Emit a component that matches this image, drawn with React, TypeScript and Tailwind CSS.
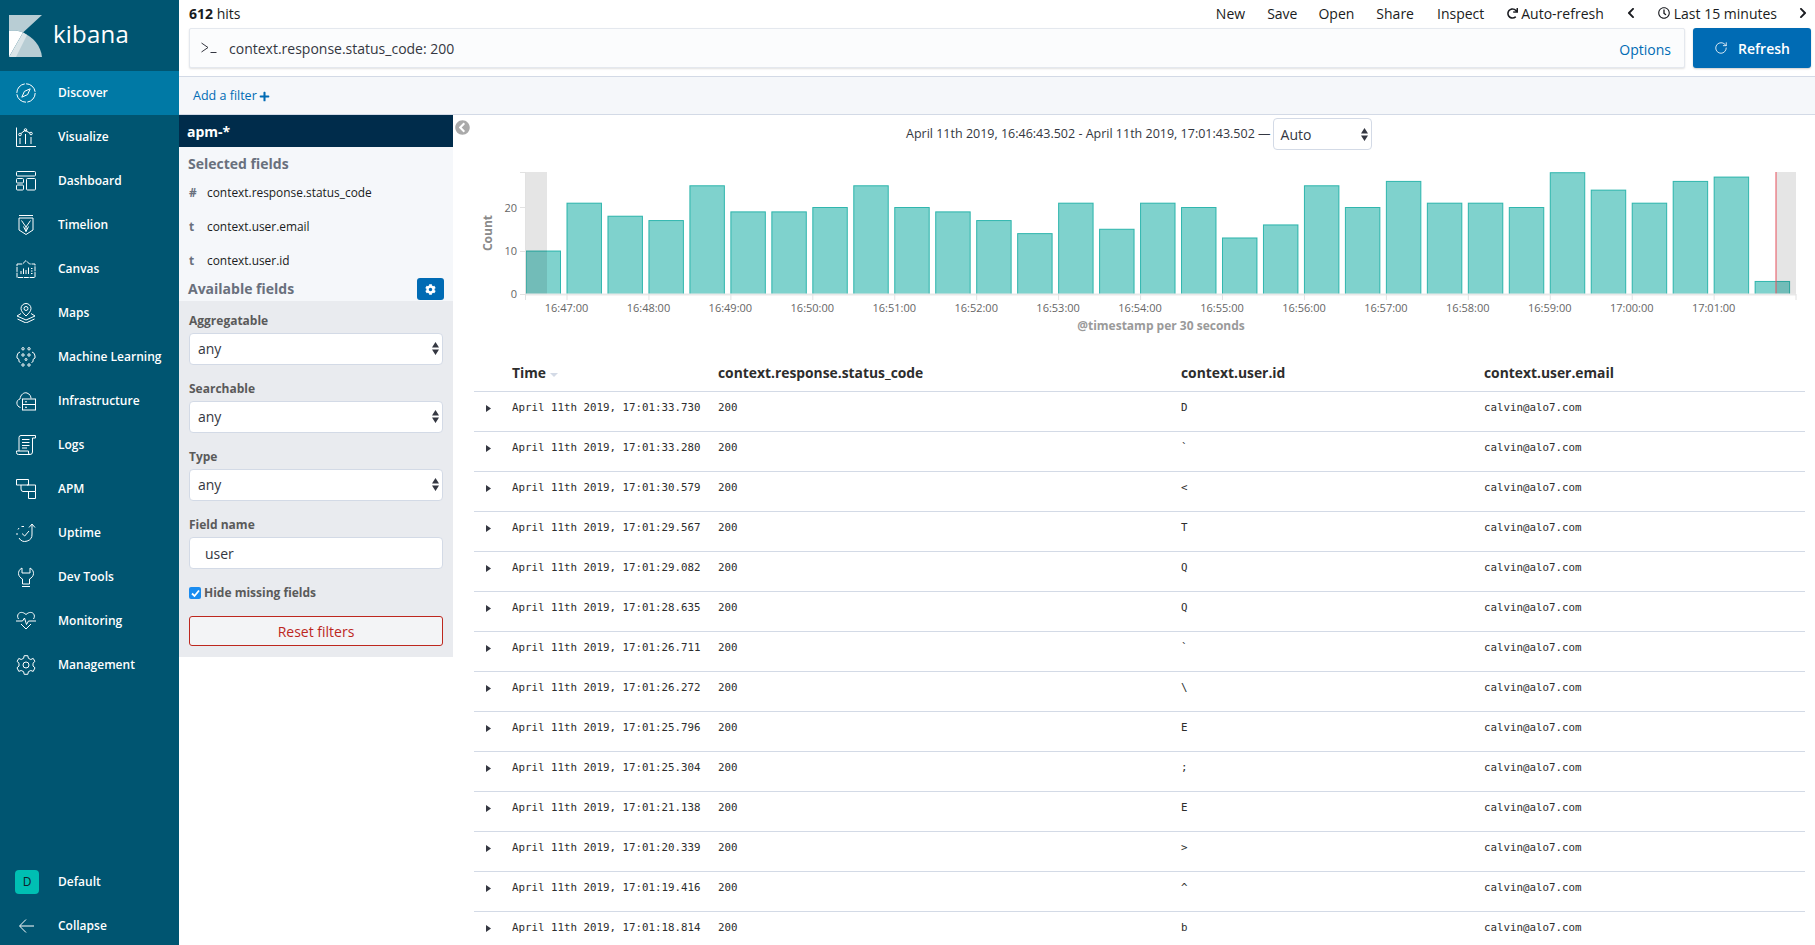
import React from "react";
import { RotateCw } from "lucide-react";
import { FaChevronCircleLeft, FaChevronLeft, FaChevronRight, FaCog, FaPlus, FaRedo, FaRegClock } from "react-icons/fa";

const counts = [10, 21, 18, 17, 25, 19, 19, 20, 25, 20, 19, 17, 14, 21, 15, 21, 20, 13, 16, 25, 20, 26, 21, 21, 20, 28, 24, 21, 26, 27, 3];
const ticks = ["16:47:00", "16:48:00", "16:49:00", "16:50:00", "16:51:00", "16:52:00", "16:53:00", "16:54:00", "16:55:00", "16:56:00", "16:57:00", "16:58:00", "16:59:00", "17:00:00", "17:01:00"];

const rows = [
  ["33.730", "D"],
  ["33.280", "`"],
  ["30.579", "<"],
  ["29.567", "T"],
  ["29.082", "Q"],
  ["28.635", "Q"],
  ["26.711", "`"],
  ["26.272", "\\"],
  ["25.796", "E"],
  ["25.304", ";"],
  ["21.138", "E"],
  ["20.339", ">"],
  ["19.416", "^"],
  ["18.814", "b"],
];

function NavIcon({ children }: { children: React.ReactNode }) {
  return (
    <svg width="20" height="20" viewBox="0 0 20 20" fill="none" stroke="white" strokeWidth="1" className="shrink-0">
      {children}
    </svg>
  );
}

const navItems: { label: string; icon: React.ReactNode }[] = [
  {
    label: "Discover",
    icon: (
      <>
        <circle cx="10" cy="10" r="9.2" strokeDasharray="13 1.4" />
        <path d="M14.2 5.8 L11.6 11.6 L5.8 14.2 L8.4 8.4 Z" />
      </>
    ),
  },
  {
    label: "Visualize",
    icon: (
      <>
        <path d="M.5 .5 V19.5 H20" />
        <path d="M4.6 6.8 L9 3.3 L14.2 6.2" />
        <circle cx="4" cy="7.5" r="1.3" />
        <circle cx="9.5" cy="3" r="1.3" />
        <circle cx="15" cy="6.5" r="1.3" />
        <path d="M4 11 V17 M9.5 7 V17 M15 10 V17" />
      </>
    ),
  },
  {
    label: "Dashboard",
    icon: (
      <>
        <rect x=".5" y=".5" width="19" height="4.5" rx="1" />
        <rect x=".5" y="7.5" width="7" height="4.5" rx="1" />
        <rect x=".5" y="14" width="7" height="5" rx="1" />
        <rect x="10.5" y="7.5" width="9" height="11.5" rx="1" />
      </>
    ),
  },
  {
    label: "Timelion",
    icon: (
      <>
        <path d="M3 .5 H17 M3 3 H17 V15 L10 19.5 L3 15 Z" />
        <path d="M5.5 5.5 L10 12 L14.5 5.5 M10 12 V16.5 M7.5 11.5 L10 16.5 L12.5 11.5" />
      </>
    ),
  },
  {
    label: "Canvas",
    icon: (
      <>
        <path d="M1 5 H6.5 L10 1.5 L13.5 5 H19 V18.5 H1 Z" strokeDasharray="5 .8" />
        <path d="M5 15 V12 M7.5 15 V9.5 M10 15 V11 M12.5 15 V8.5 M15 9.5 H16.5 M15 12 H16.5 M15 14.5 H16.5" />
      </>
    ),
  },
  {
    label: "Maps",
    icon: (
      <>
        <path d="M10 13 C7 10 5 8 5 5.5 A5 5 0 0 1 15 5.5 C15 8 13 10 10 13 Z" />
        <circle cx="10" cy="5.5" r="2" />
        <path d="M5 10.5 L1 13 L10 17 L19 13 L15 10.5 M1.5 16 L10 20 L18.5 16" />
      </>
    ),
  },
  {
    label: "Machine Learning",
    icon: (
      <>
        <circle cx="7" cy="1.8" r="1.2" />
        <circle cx="13" cy="1.8" r="1.2" />
        <circle cx="7" cy="8" r="1.2" />
        <circle cx="13" cy="8" r="1.2" />
        <circle cx="7" cy="18" r="1.2" />
        <circle cx="13" cy="18" r="1.2" />
        <circle cx="10" cy="12.5" r="1" />
        <path d="M4 5 Q1 6 1 9 V11 L3 12.5 Q2 15 4.5 15.5 M16 5 Q19 6 19 9 V11 L17 12.5 Q18 15 15.5 15.5" />
      </>
    ),
  },
  {
    label: "Infrastructure",
    icon: (
      <>
        <path d="M4.5 16.5 C0 15.5 -.5 9 4 8 C4.5 3.5 8 1 11 2 C14 3 15 5.5 15 7.5" />
        <rect x="6.5" y="8" width="13" height="11" />
        <path d="M6.5 13.5 H19.5 M9 10.8 H11 M9 16.3 H11" />
      </>
    ),
  },
  {
    label: "Logs",
    icon: (
      <>
        <path d="M3 16 V2.5 A2 2 0 0 1 5 .5 H19.5 V3 H16.5 V17 Q16.5 19.5 14 19.5 H2.5 Q.5 19.5 .5 17.5 V16 H12.5 V18 Q12.5 19.5 14 19.5" />
        <path d="M6 4.5 H13.5 M6 7.5 H13.5 M6 10.5 H13.5 M6 13 H11" />
      </>
    ),
  },
  {
    label: "APM",
    icon: (
      <>
        <path d="M.5 .5 H12.5 V6 H.5 Z" strokeDasharray="19 7.5 50" />
        <path d="M3.5 6 H19.5 V12.5 H7 Q5 12.5 5 10 V6" />
        <path d="M12.5 12.5 V19.5 H19.5 V12.5" />
      </>
    ),
  },
  {
    label: "Uptime",
    icon: (
      <>
        <path d="M16 1 L13 4.5 M16 1 L19 4.5 M16 1 V11 A7 7 0 0 1 3 15 M1 12 V10 M2 6.5 L3 5 M5.5 3.5 H8" />
        <path d="M6 10.5 L8.7 13 L13 8" />
      </>
    ),
  },
  {
    label: "Dev Tools",
    icon: (
      <>
        <path d="M6 1 C3 2.5 2.5 5 2.5 6.5 C2.5 9 4.5 11 6.5 12 V17 H13.5 V12 C15.5 11 17.5 9 17.5 6.5 C17.5 5 17 2.5 14 1 V6 H6 Z" />
        <path d="M6 19.5 H14" />
      </>
    ),
  },
  {
    label: "Monitoring",
    icon: (
      <>
        <path d="M2.5 8 C-.5 3.5 4.5 -1.5 10 3.5 C15.5 -1.5 20.5 3.5 17.5 8" />
        <path d="M0 10 H6.5 L8.5 7 L10.5 13.5 L12.5 10 H20" />
        <path d="M5 13 L10 18 L15 13" />
      </>
    ),
  },
  {
    label: "Management",
    icon: (
      <>
        <path d="M8.2 .7 H11.8 L12.4 3.3 L14.8 4.5 L17.2 3.4 L18.9 6.4 L17 8.2 V11 L19 12.8 L17.2 16.4 L14.8 15.5 L12.4 16.7 L11.8 19.3 H8.2 L7.6 16.7 L5.2 15.5 L2.8 16.4 L1 12.8 L3 11 V8.2 L1.1 6.4 L2.8 3.4 L5.2 4.5 L7.6 3.3 Z" />
        <circle cx="10" cy="10" r="3" />
      </>
    ),
  },
];

function KibanaLogo() {
  return (
    <svg width="34" height="42" viewBox="9 13 34 42" className="ml-[9px] shrink-0">
      <path d="M9 13 H42 L23 30.5 C18 28.5 13 28.2 9 29 Z" fill="#b8cdd4" />
      <path d="M23 30.5 C33 35 41 44 42 55 H24 L15 55 Z" fill="#b8cdd4" />
      <path d="M9 29 C13 28.2 18 28.5 23 30.5 L9 55 Z" fill="#ffffff" />
      <path d="M23 30.5 L9 55 H16 L27 33 Z" fill="#dbe5e8" />
    </svg>
  );
}

function Sidebar() {
  return (
    <aside className="flex h-full w-[179px] shrink-0 flex-col overflow-hidden bg-[#005571] font-['Open_Sans',sans-serif] text-[12px] font-semibold text-white">
      <div className="flex h-[71px] shrink-0 items-center gap-[10px]">
        <KibanaLogo />
        <span className="mt-[-3px] text-[24px] font-normal leading-none tracking-[0.2px]">kibana</span>
      </div>
      {navItems.map((item, i) => (
        <div key={item.label} className={`flex h-[44px] shrink-0 items-center gap-[22px] pl-[16px] ${i === 0 ? "bg-[#0079a5]" : ""}`}>
          <NavIcon>{item.icon}</NavIcon>
          <span>{item.label}</span>
        </div>
      ))}
      <div className="mt-auto mb-[-3px] shrink-0">
        <div className="flex h-[44px] items-center gap-[19px] pl-[15px]">
          <div className="flex h-[24px] w-[24px] items-center justify-center rounded-[4px] bg-[#00bfb3] text-[12px] font-normal text-[#10202a]">D</div>
          <span>Default</span>
        </div>
        <div className="flex h-[44px] items-center gap-[22px] pl-[16px]">
          <NavIcon>
            <path d="M19 10 H5 M11 3.5 L4.5 10 L11 16.5" transform="translate(-1 0)" />
          </NavIcon>
          <span>Collapse</span>
        </div>
      </div>
    </aside>
  );
}

function TopBar() {
  return (
    <div className="flex h-[28px] shrink-0 items-center pb-[2px] pl-[10px] pr-[6px] text-[14px] text-[#1a1c21]">
      <span>
        <b className="font-bold">612</b> hits
      </span>
      <div className="ml-auto flex items-center">
        <span>New</span>
        <span className="ml-[22px]">Save</span>
        <span className="ml-[21px]">Open</span>
        <span className="ml-[22px]">Share</span>
        <span className="ml-[23px]">Inspect</span>
        <FaRedo size={11} className="ml-[23px]" />
        <span className="ml-[3px]">Auto-refresh</span>
        <FaChevronLeft size={12} className="ml-[21px]" />
        <FaRegClock size={12} className="ml-[21px]" />
        <span className="ml-[4px]">Last 15 minutes</span>
        <FaChevronRight size={12} className="ml-[20px]" />
      </div>
    </div>
  );
}

function QueryBar() {
  return (
    <div className="flex h-[40px] shrink-0 items-stretch pl-[10px] pr-[4px]">
      <div className="flex w-[1496px] items-center rounded-[2px] border border-[#e4e8ee] bg-[#fbfcfd] pl-[11px] pr-[13px] text-[14px] text-[#343741] shadow-[0_1px_2px_rgba(0,0,0,0.12)]">
        <svg width="16" height="12" viewBox="0 0 16 12" fill="none" stroke="#343741" strokeWidth="1" className="shrink-0">
          <path d="M.5 1 L7 5.5 L.5 10 M9.5 10.5 H15.5" />
        </svg>
        <span className="ml-[12px]">context.response.status_code: 200</span>
        <span className="ml-auto mt-[2px] text-[#006bb4]">Options</span>
      </div>
      <div className="ml-[8px] flex w-[118px] items-center justify-center gap-[10px] rounded-[3px] bg-[#006bb4] text-[14px] font-semibold text-white shadow-[0_1px_2px_rgba(0,0,0,0.2)]">
        <RotateCw size={14} strokeWidth={1.4} />
        <span>Refresh</span>
      </div>
    </div>
  );
}

function FilterBar() {
  return (
    <div className="mt-[8px] flex h-[39px] shrink-0 items-center border-y border-[#d3dae6] bg-[#f5f7fa] pl-[14px] pt-[1px] text-[12.5px] text-[#006bb4]">
      <span>Add a filter</span>
      <FaPlus size={11} className="ml-[2px]" />
    </div>
  );
}

function Arrows() {
  return (
    <svg width="7" height="13" viewBox="0 0 7 13" fill="#343741" className="shrink-0">
      <path d="M3.5 0 L7 5.4 H0 Z M3.5 13 L7 7.6 H0 Z" />
    </svg>
  );
}

function SelectBox({ value }: { value: string }) {
  return (
    <div className="flex h-[32px] items-center justify-between rounded-[4px] border border-[#d3dae6] bg-white pb-[1px] pl-[8px] pr-[3px] text-[14px] text-[#343741]">
      <span>{value}</span>
      <Arrows />
    </div>
  );
}

function FieldLabel({ children }: { children: React.ReactNode }) {
  return <div className="mb-[4px] h-[17px] text-[12px] font-bold leading-[17px] text-[#5a5a5a]">{children}</div>;
}

function FieldItem({ type, name }: { type: string; name: string }) {
  return (
    <div className="flex h-[34px] items-center text-[11.9px] text-[#1a1c21]">
      <span className="w-[19px] pl-[1px] font-bold text-[#69707d]">{type}</span>
      <span>{name}</span>
    </div>
  );
}

function FieldsPanel() {
  return (
    <div className="w-[274px] shrink-0">
      <div className="flex h-[32px] items-center bg-[#002c4b] pl-[8px] text-[14px] font-bold text-white">apm-*</div>
      <div className="bg-[#f5f7fa] pl-[9px] pr-[9px]">
        <div className="flex h-[29px] items-center pt-[3px] text-[14px] font-bold text-[#69707d]">Selected fields</div>
        <FieldItem type="#" name="context.response.status_code" />
        <FieldItem type="t" name="context.user.email" />
        <FieldItem type="t" name="context.user.id" />
        <div className="flex h-[23px] items-start justify-between text-[14px] font-bold leading-[22px] text-[#69707d]">
          <span>Available fields</span>
          <div className="flex h-[22px] w-[27px] items-center justify-center rounded-[3px] bg-[#006bb4]">
            <FaCog size={11} color="white" />
          </div>
        </div>
      </div>
      <div className="bg-[#e9ebef] pb-[11px] pl-[10px] pr-[10px] pt-[11px]">
        <FieldLabel>Aggregatable</FieldLabel>
        <SelectBox value="any" />
        <div className="h-[15px]" />
        <FieldLabel>Searchable</FieldLabel>
        <SelectBox value="any" />
        <div className="h-[15px]" />
        <FieldLabel>Type</FieldLabel>
        <SelectBox value="any" />
        <div className="h-[15px]" />
        <FieldLabel>Field name</FieldLabel>
        <div className="flex h-[32px] items-center rounded-[4px] border border-[#d3dae6] bg-white pl-[15px] text-[14px] text-[#343741]">user</div>
        <div className="mt-[17px] flex h-[14px] items-center">
          <div className="flex h-[12px] w-[12px] items-center justify-center rounded-[2px] bg-[#1a8cf0]">
            <svg width="9" height="9" viewBox="0 0 9 9" fill="none" stroke="white" strokeWidth="1.8">
              <path d="M1 4.5 L3.5 7 L8 1.5" />
            </svg>
          </div>
          <span className="ml-[3px] text-[12px] font-bold text-[#5a5a5a]">Hide missing fields</span>
        </div>
        <div className="mt-[16px] flex h-[30px] items-center justify-center rounded-[3px] border border-[#bd271e] bg-[#f3f4f6] text-[14px] text-[#bd271e]">Reset filters</div>
      </div>
    </div>
  );
}

function Histogram() {
  const pitch = 40.97;
  const base = 294.5;
  const unit = 4.35;
  return (
    <svg width="1362" height="200" viewBox="453 155 1362 200" className="block shrink-0 font-['Open_Sans',sans-serif]">
      {counts.map((c, i) => (
        <rect
          key={i}
          x={526 + i * pitch}
          y={base - c * unit}
          width={34.5}
          height={c * unit}
          fill="#00a69b"
          fillOpacity="0.5"
          stroke="#00a69b"
          strokeOpacity="0.75"
          strokeWidth="1"
        />
      ))}
      <rect x="525.5" y="172" width="21.5" height="122" fill="#000" fillOpacity="0.1" />
      <rect x="1776" y="172" width="20" height="122" fill="#000" fillOpacity="0.1" />
      <rect x="1775" y="172" width="2" height="122" fill="#e8505b" fillOpacity="0.5" />
      <path d="M525.5 294.5 H1796" stroke="#e9e9e9" strokeWidth="2" />
      <path d="M525.5 172 V300 M520 172.5 H525.5 M520 207.5 H525.5 M520 251.5 H525.5 M520 294.5 H525.5 M1796 294 V300" stroke="#e2e2e2" strokeWidth="1" fill="none" />
      {[["20", 212], ["10", 255], ["0", 298]].map(([t, y]) => (
        <text key={t} x="517" y={y} textAnchor="end" fontSize="11" fill="#666">
          {t}
        </text>
      ))}
      {ticks.map((t, i) => (
        <g key={t}>
          <path d={`M${567 + i * 81.94} 294 V300`} stroke="#e2e2e2" />
          <text x={566.5 + i * 81.94} y="312" textAnchor="middle" fontSize="11" fill="#666">
            {t}
          </text>
        </g>
      ))}
      <text x="0" y="0" transform="translate(492 233) rotate(-90)" textAnchor="middle" fontSize="12" fontWeight="700" fill="#8a8a8a">
        Count
      </text>
      <text x="1161" y="330" textAnchor="middle" fontSize="12" fontWeight="700" fill="#9a9a9a">
        @timestamp per 30 seconds
      </text>
    </svg>
  );
}

function DocTable() {
  return (
    <div className="ml-[21px] w-[1331px]">
      <div className="flex h-[37px] items-center border-b border-[#d3dae6] text-[13.85px] font-bold text-[#2d2d2d]">
        <div className="flex w-[244px] items-center pl-[38px]">
          Time
          <svg width="8" height="4" viewBox="0 0 8 4" fill="#d3dae6" className="ml-[4px] mt-[4px]">
            <path d="M0 0 H8 L4 4 Z" />
          </svg>
        </div>
        <div className="w-[463px]">context.response.status_code</div>
        <div className="w-[303px]">context.user.id</div>
        <div>context.user.email</div>
      </div>
      {rows.map(([ms, id], i) => (
        <div key={i} className="flex h-[40px] border-b border-[#d3dae6] pt-[9px] font-['DejaVu_Sans_Mono',monospace] text-[10.8px] leading-[14px] text-[#2d2d2d]">
          <div className="relative flex w-[244px] pl-[38px]">
            <svg width="5" height="7" viewBox="0 0 5 7" fill="#343741" className="absolute left-[12px] top-[4px]">
              <path d="M0 0 L5 3.5 L0 7 Z" />
            </svg>
            April 11th 2019, 17:01:{ms}
          </div>
          <div className="w-[463px]">200</div>
          <div className="w-[303px]">{id}</div>
          <div>calvin@alo7.com</div>
        </div>
      ))}
    </div>
  );
}

function ResultsPanel() {
  return (
    <div className="relative min-w-0 flex-1">
      <FaChevronCircleLeft size={15} color="#aaaaaa" className="absolute left-[2px] top-[5px]" />
      <div className="flex h-[40px] items-start pl-[453px] pt-[3px]">
        <div className="flex items-center">
          <span className="text-[12.5px] text-[#343741]">April 11th 2019, 16:46:43.502 - April 11th 2019, 17:01:43.502 —</span>
          <div className="ml-[2px] flex h-[32px] w-[99px] items-center justify-between rounded-[4px] border border-[#d3dae6] bg-white pl-[7px] pr-[3px] text-[14px] text-[#343741]">
            <span>Auto</span>
            <Arrows />
          </div>
        </div>
      </div>
      <Histogram />
      <DocTable />
    </div>
  );
}

export default function App() {
  return (
    <div className="flex h-screen w-full overflow-hidden bg-white font-['Open_Sans',sans-serif]">
      <Sidebar />
      <main className="flex min-w-0 flex-1 flex-col">
        <TopBar />
        <QueryBar />
        <FilterBar />
        <div className="flex min-h-0 flex-1 items-start">
          <FieldsPanel />
          <ResultsPanel />
        </div>
      </main>
    </div>
  );
}
